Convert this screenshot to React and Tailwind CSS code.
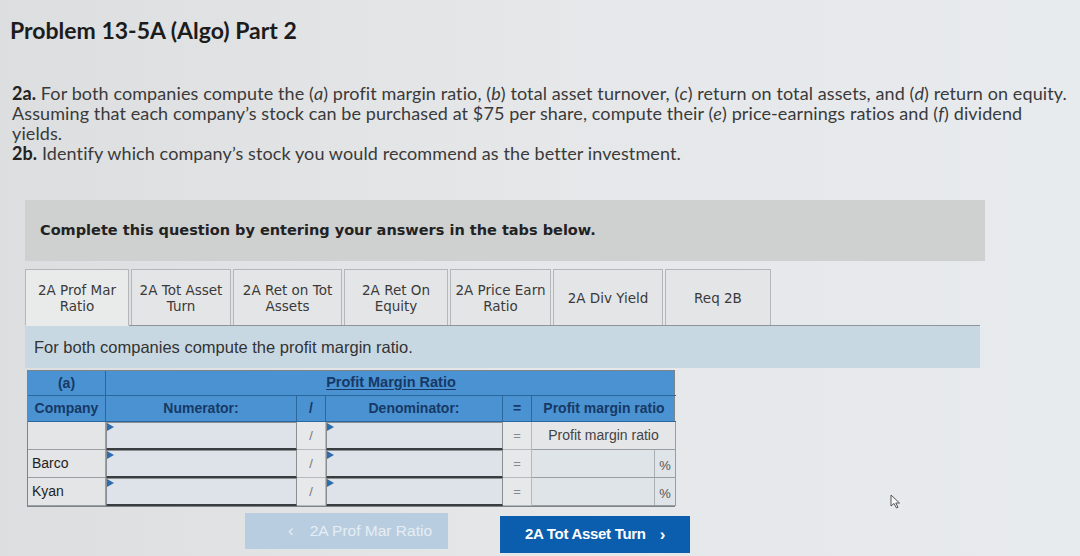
import React from "react";

const Tri = () => (
  <span className="absolute left-0 top-0 w-0 h-0 border-t-[4px] border-b-[4px] border-l-[7px] border-t-transparent border-b-transparent border-l-[#2f6cae]" />
);

const Input = ({ w }) => (
  <div className={`relative h-full bg-[#dde3e8] border border-[#8a8f94] border-b-2 border-b-[#3a3d40] ${w || ""}`}>
    <Tri />
  </div>
);

const tabs = [
  ["2A Prof Mar", "Ratio", "w-[104px]"],
  ["2A Tot Asset", "Turn", "w-[100px]"],
  ["2A Ret on Tot", "Assets", "w-[109px]"],
  ["2A Ret On", "Equity", "w-[104px]"],
  ["2A Price Earn", "Ratio", "w-[101px]"],
  ["2A Div Yield", null, "w-[110px]"],
  ["Req 2B", null, "w-[106px]"],
];

function Row({ company, first }) {
  return (
    <div className="grid grid-cols-[78px_191px_29px_177px_29px_144px] h-[28px] text-[14px]" style={{ fontFamily: "'Liberation Sans', Arial, sans-serif" }}>
      <div className="bg-[#e3e5e6] border-r border-b border-[#9a9ea2] flex items-center pl-[4px] text-[#1e1e1e]">{company}</div>
      <div className="p-0"><Input /></div>
      <div className="bg-[#e6e8ea] border-b border-r border-[#b5b9bc] flex items-center justify-center text-[#777] text-[13px]">/</div>
      <div><Input /></div>
      <div className="bg-[#e6e8ea] border-b border-r border-[#b5b9bc] flex items-center justify-center text-[#888] text-[13px]">=</div>
      {first ? (
        <div className="bg-[#e4e6e8] border-b border-r border-[#9a9ea2] flex items-center justify-center text-[#444] text-[14px]">Profit margin ratio</div>
      ) : (
        <div className="flex border-b border-r border-[#9a9ea2] bg-[#dfe4e8]">
          <div className="flex-1 border-r border-[#aab0b5]" />
          <div className="w-[20px] flex items-end justify-center pb-[2px] text-[#555] text-[13px]">%</div>
        </div>
      )}
    </div>
  );
}

export default function App() {
  return (
    <div className="relative w-[1080px] h-[556px] overflow-hidden bg-linear-to-r from-[#dcdedf] via-[#e5e7e9] to-[#e8ebee]">
      <div className="pl-[10px] pt-[16px]" style={{ fontFamily: "Lato, 'Open Sans', sans-serif" }}>
        <h1 className="text-[23px] font-bold text-[#1c1c1c] leading-[28px]">Problem 13-5A (Algo) Part 2</h1>
        <p className="mt-[39px] pl-[2px] text-[18px] tracking-[0.1px] leading-[20px] text-[#3a3a3a]">
          <b className="text-[#222]">2a.</b> For both companies compute the (<i>a</i>) profit margin ratio, (<i>b</i>) total asset turnover, (<i>c</i>) return on total assets, and (<i>d</i>) return on equity.
          <br />
          Assuming that each company’s stock can be purchased at $75 per share, compute their (<i>e</i>) price-earnings ratios and (<i>f</i>) dividend
          <br />
          yields.
          <br />
          <b className="text-[#222]">2b.</b> Identify which company’s stock you would recommend as the better investment.
        </p>
      </div>

      <div className="ml-[25px] mt-[37px] w-[960px] h-[61px] bg-[#cfd0d0] flex items-center pl-[15px]" style={{ fontFamily: "'DejaVu Sans', Verdana, sans-serif" }}>
        <span className="text-[14.5px] font-bold text-[#222]">Complete this question by entering your answers in the tabs below.</span>
      </div>

      <div className="ml-[25px] mt-[5px] w-[955px]">
        <div className="flex items-end gap-[2px] border-b border-[#8f9497] h-[60px]" style={{ fontFamily: "'DejaVu Sans', Verdana, sans-serif" }}>
          {tabs.map(([a, b, w], i) => (
            <div
              key={i}
              className={`${w} h-[56px] flex flex-col items-center justify-center text-[13.5px] leading-[16px] text-[#3a3a3a] border border-[#b4b7b9] ${i === 0 ? "bg-[#e9eaea] border-b-[#e9eaea] h-[57px] -mb-px" : "bg-[#e4e5e6] border-b-0"}`}
            >
              <span>{a}</span>
              {b && <span>{b}</span>}
            </div>
          ))}
        </div>
        <div className="h-[42px] bg-[#c8d8e3] flex items-center pl-[9px] text-[16.5px] text-[#333]" style={{ fontFamily: "'Liberation Sans', Arial, sans-serif" }}>
          For both companies compute the profit margin ratio.
        </div>

        <div className="mt-[2px] ml-[2px] w-[648px] border border-[#7c8389]">
          <div className="grid grid-cols-[78px_570px] h-[25px] bg-[#4a92d2] text-[14px] font-bold text-[#173966]" style={{ fontFamily: "'Liberation Sans', Arial, sans-serif" }}>
            <div className="border-r border-b border-[#2c679c] flex items-center justify-center">(a)</div>
            <div className="border-b border-[#2c679c] flex items-center justify-center underline underline-offset-2 text-[14.5px]">Profit Margin Ratio</div>
          </div>
          <div className="grid grid-cols-[78px_191px_29px_177px_29px_144px] h-[26px] bg-[#4a92d2] text-[14px] font-bold text-[#173966]" style={{ fontFamily: "'Liberation Sans', Arial, sans-serif" }}>
            <div className="border-r border-b border-[#2c679c] flex items-center justify-center">Company</div>
            <div className="border-r border-b border-[#2c679c] flex items-center justify-center">Numerator:</div>
            <div className="border-r border-b border-[#2c679c] flex items-center justify-center">/</div>
            <div className="border-r border-b border-[#2c679c] flex items-center justify-center">Denominator:</div>
            <div className="border-r border-b border-[#2c679c] flex items-center justify-center">=</div>
            <div className="border-b border-[#2c679c] flex items-center justify-center">Profit margin ratio</div>
          </div>
          <Row company="" first />
          <Row company="Barco" />
          <Row company="Kyan" />
        </div>

        <div className="flex mt-[6px] ml-[220px] gap-[52px] items-start" style={{ fontFamily: "'Liberation Sans', Arial, sans-serif" }}>
          <div className="w-[203px] h-[36px] bg-[#b8cee0] flex items-center pl-[43px] gap-[16px] text-[15.5px] text-[#e6edf3]">
            <span className="text-[17px]">‹</span>
            <span>2A Prof Mar Ratio</span>
          </div>
          <div className="mt-[3px] w-[190px] h-[37px] bg-[#0b5eae] flex items-center justify-center gap-[14px] text-[15px] tracking-[-0.3px] font-bold text-white">
            <span>2A Tot Asset Turn</span>
            <span className="text-[17px]">›</span>
          </div>
        </div>
      </div>

      <svg className="absolute left-[890px] top-[494px]" width="14" height="16" viewBox="0 0 14 16">
        <path d="M1 1 L1 12 L4 9.5 L6.5 14 L8 13.3 L5.8 9 L9.5 9 Z" fill="#f4f6f8" stroke="#555" strokeWidth="1" strokeLinejoin="round" />
      </svg>
    </div>
  );
}
